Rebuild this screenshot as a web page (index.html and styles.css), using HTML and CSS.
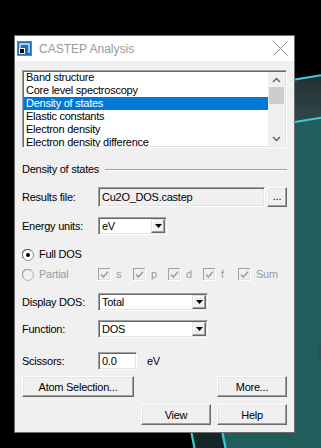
FILE: index.html
```html
<!DOCTYPE html>
<html>
<head>
<meta charset="utf-8">
<link rel="stylesheet" href="styles.css">
</head>
<body>
<svg class="backdrop" width="321" height="448" viewBox="0 0 321 448">
  <defs>
    <linearGradient id="band" x1="0" y1="0" x2="0" y2="1">
      <stop offset="0" stop-color="#243032"/>
      <stop offset="1" stop-color="#2f4748"/>
    </linearGradient>
  </defs>
  <rect width="321" height="448" fill="#000"/>
  <polygon points="295,79.5 321,75.2 321,117.7 295,122" fill="url(#band)"/>
  <polygon points="295,122 321,117.7 321,448 295,448" fill="#215d5b"/>
  <polygon points="223,433 321,433 321,448 226,448" fill="#215d5b"/>
  <polygon points="192,433 222,433 225,448 195,448" fill="#172628"/>
  <ellipse cx="323" cy="352" rx="5" ry="9" fill="#2f4f50"/>
  <line x1="295" y1="79.5" x2="321" y2="75.2" stroke="#3cccd4" stroke-width="2"/>
  <line x1="295" y1="122" x2="321" y2="117.7" stroke="#3cccd4" stroke-width="2"/>
  <line x1="191.5" y1="433" x2="194.5" y2="448" stroke="#3cccd4" stroke-width="2.2"/>
  <line x1="222.5" y1="433" x2="225.5" y2="448" stroke="#3cccd4" stroke-width="2.2"/>
</svg>

<div class="window">
  <div class="titlebar">
    <svg class="app-icon" width="15" height="15" viewBox="0 0 15 15">
      <rect x="0" y="0" width="15" height="15" fill="#3f8fd8"/>
      <rect x="1" y="1" width="13" height="13" fill="#1c6db8"/>
      <path d="M3 12 V3 H12 V12" fill="none" stroke="#d6ebfb" stroke-width="1.4"/>
      <rect x="2.5" y="7.5" width="5" height="5" fill="#0a0a0a" stroke="#e8f3fc" stroke-width="1"/>
    </svg>
    <span class="title">CASTEP Analysis</span>
    <svg class="close" width="15" height="15" viewBox="0 0 15 15">
      <path d="M0.5 0.5 L14.5 14.5 M14.5 0.5 L0.5 14.5" stroke="#8a8a8a" stroke-width="1" fill="none"/>
    </svg>
  </div>

  <div class="panel">
    <div class="listbox sunken">
      <ul class="items">
        <li>Band structure</li>
        <li>Core level spectroscopy</li>
        <li class="selected">Density of states</li>
        <li>Elastic constants</li>
        <li>Electron density</li>
        <li>Electron density difference</li>
      </ul>
      <div class="scrollbar">
        <div class="sb-btn">
          <svg width="9" height="6" viewBox="0 0 9 6"><path d="M1 5 L4.5 1.5 L8 5" fill="none" stroke="#606060" stroke-width="1.4"/></svg>
        </div>
        <div class="thumb"></div>
        <div class="sb-space"></div>
        <div class="sb-btn">
          <svg width="9" height="6" viewBox="0 0 9 6"><path d="M1 1 L4.5 4.5 L8 1" fill="none" stroke="#606060" stroke-width="1.4"/></svg>
        </div>
      </div>
    </div>

    <div class="group">
      <span>Density of states</span>
      <div class="rule"></div>
    </div>

    <div class="row row-file">
      <span class="label">Results file:</span>
      <div class="field sunken">Cu2O_DOS.castep</div>
      <div class="btn btn-browse">...</div>
    </div>

    <div class="row row-energy">
      <span class="label">Energy units:</span>
      <div class="combo sunken combo-energy">
        <span class="value">eV</span>
        <div class="drop"><svg width="7" height="4" viewBox="0 0 7 4"><path d="M0 0 H7 L3.5 4 Z" fill="#000"/></svg></div>
      </div>
    </div>

    <div class="row row-full">
      <div class="radio-label">
        <svg width="12" height="12" viewBox="0 0 12 12">
          <circle cx="6" cy="6" r="5.5" fill="#fff" stroke="#8c8c8c"/>
          <path d="M1.6 9 A5 5 0 0 1 9 1.6" fill="none" stroke="#5a5a5a" stroke-width="1"/>
          <circle cx="6" cy="6" r="2" fill="#000"/>
        </svg>
        <span>Full DOS</span>
      </div>
    </div>

    <div class="row row-partial">
      <div class="radio-label disabled">
        <svg width="12" height="12" viewBox="0 0 12 12">
          <circle cx="6" cy="6" r="5.5" fill="#f0f0f0" stroke="#b4b4b4"/>
          <path d="M1.6 9 A5 5 0 0 1 9 1.6" fill="none" stroke="#9a9a9a" stroke-width="1"/>
        </svg>
        <span>Partial</span>
      </div>
      <div class="check disabled">
        <svg width="13" height="13" viewBox="0 0 13 13"><rect x="0" y="0" width="13" height="13" fill="#fff"/><rect x="0" y="0" width="12" height="12" fill="#a0a0a0"/><rect x="1" y="1" width="11" height="11" fill="#e3e3e3"/><rect x="1" y="1" width="10" height="10" fill="#f0f0f0"/><path d="M3 6.5 L5.3 9 L10 3.8" fill="none" stroke="#a0a0a0" stroke-width="1.6"/></svg>
        <span>s</span>
      </div>
      <div class="check disabled">
        <svg width="13" height="13" viewBox="0 0 13 13"><rect x="0" y="0" width="13" height="13" fill="#fff"/><rect x="0" y="0" width="12" height="12" fill="#a0a0a0"/><rect x="1" y="1" width="11" height="11" fill="#e3e3e3"/><rect x="1" y="1" width="10" height="10" fill="#f0f0f0"/><path d="M3 6.5 L5.3 9 L10 3.8" fill="none" stroke="#a0a0a0" stroke-width="1.6"/></svg>
        <span>p</span>
      </div>
      <div class="check disabled">
        <svg width="13" height="13" viewBox="0 0 13 13"><rect x="0" y="0" width="13" height="13" fill="#fff"/><rect x="0" y="0" width="12" height="12" fill="#a0a0a0"/><rect x="1" y="1" width="11" height="11" fill="#e3e3e3"/><rect x="1" y="1" width="10" height="10" fill="#f0f0f0"/><path d="M3 6.5 L5.3 9 L10 3.8" fill="none" stroke="#a0a0a0" stroke-width="1.6"/></svg>
        <span>d</span>
      </div>
      <div class="check disabled">
        <svg width="13" height="13" viewBox="0 0 13 13"><rect x="0" y="0" width="13" height="13" fill="#fff"/><rect x="0" y="0" width="12" height="12" fill="#a0a0a0"/><rect x="1" y="1" width="11" height="11" fill="#e3e3e3"/><rect x="1" y="1" width="10" height="10" fill="#f0f0f0"/><path d="M3 6.5 L5.3 9 L10 3.8" fill="none" stroke="#a0a0a0" stroke-width="1.6"/></svg>
        <span>f</span>
      </div>
      <div class="check disabled">
        <svg width="13" height="13" viewBox="0 0 13 13"><rect x="0" y="0" width="13" height="13" fill="#fff"/><rect x="0" y="0" width="12" height="12" fill="#a0a0a0"/><rect x="1" y="1" width="11" height="11" fill="#e3e3e3"/><rect x="1" y="1" width="10" height="10" fill="#f0f0f0"/><path d="M3 6.5 L5.3 9 L10 3.8" fill="none" stroke="#a0a0a0" stroke-width="1.6"/></svg>
        <span>Sum</span>
      </div>
    </div>

    <div class="row row-display">
      <span class="label">Display DOS:</span>
      <div class="combo sunken combo-wide">
        <span class="value">Total</span>
        <div class="drop"><svg width="7" height="4" viewBox="0 0 7 4"><path d="M0 0 H7 L3.5 4 Z" fill="#000"/></svg></div>
      </div>
    </div>

    <div class="row row-function">
      <span class="label">Function:</span>
      <div class="combo sunken combo-wide">
        <span class="value">DOS</span>
        <div class="drop"><svg width="7" height="4" viewBox="0 0 7 4"><path d="M0 0 H7 L3.5 4 Z" fill="#000"/></svg></div>
      </div>
    </div>

    <div class="row row-scissors">
      <span class="label">Scissors:</span>
      <div class="textbox sunken">0.0</div>
      <span class="unit">eV</span>
    </div>

    <div class="row row-buttons1">
      <div class="btn btn-atom">Atom Selection...</div>
      <div class="btn btn-std">More...</div>
    </div>

    <div class="row row-buttons2">
      <div class="btn btn-std">View</div>
      <div class="btn btn-std">Help</div>
    </div>
  </div>
</div>
</body>
</html>
```

FILE: styles.css
```css
* { box-sizing: border-box; }

html, body {
  margin: 0;
  background: #000;
}

body {
  position: relative;
  width: 321px;
  height: 448px;
  overflow: hidden;
  padding: 35px 0 0 14px;
  font-family: "Liberation Sans", Arial, sans-serif;
  font-size: 11px;
  color: #000;
}

.backdrop {
  position: absolute;
  left: 0;
  top: 0;
}

.window {
  position: relative;
  width: 281px;
  height: 398px;
  border: 1px solid #6e6e6e;
  background: #f0f0f0;
  display: flex;
  flex-direction: column;
}

.titlebar {
  flex: none;
  height: 25px;
  background: #fff;
  display: flex;
  align-items: center;
  padding: 0 6px 0 2px;
}

.app-icon, .close { flex: none; }

.title {
  flex: 1;
  margin-left: 7px;
  font-size: 12px;
  color: #999;
  white-space: nowrap;
}

.panel {
  flex: 1;
  display: flex;
  flex-direction: column;
  padding: 9px 7px 7px 7px;
  letter-spacing: -0.25px;
}

.sunken {
  border: 1px solid;
  border-color: #a0a0a0 #fff #fff #a0a0a0;
  box-shadow: inset 1px 1px #696969, inset -1px -1px #e3e3e3;
}

.listbox {
  flex: none;
  height: 78px;
  padding: 1px;
  background: #fff;
  display: flex;
  overflow: hidden;
}

.items {
  list-style: none;
  margin: -1px 0 0 0;
  padding: 0;
  flex: 1;
  min-width: 0;
}

.items li {
  height: 13px;
  line-height: 13px;
  padding-left: 2px;
  white-space: nowrap;
}

.items li.selected {
  background: #0078d7;
  color: #fff;
}

.scrollbar {
  flex: none;
  width: 17px;
  background: #f0f0f0;
  display: flex;
  flex-direction: column;
  align-items: center;
}

.sb-btn {
  height: 15px;
  width: 17px;
  display: flex;
  align-items: center;
  justify-content: center;
}

.thumb {
  width: 15px;
  height: 17px;
  background: #cdcdcd;
}

.sb-space { flex: 1; }

.group {
  flex: none;
  margin-top: 15px;
  height: 13px;
  line-height: 13px;
  display: flex;
  align-items: center;
}

.rule {
  flex: 1;
  margin-left: 6px;
  margin-top: 1px;
  border-top: 1px solid #a0a0a0;
  border-bottom: 1px solid #fff;
}

.row {
  flex: none;
  display: flex;
  align-items: center;
}

.label {
  flex: none;
  width: 76px;
  line-height: 13px;
  white-space: nowrap;
}

.row-file { margin-top: 11px; height: 20px; }

.field {
  width: 167px;
  height: 20px;
  padding: 0 3px;
  background: #f0f0f0;
  display: flex;
  align-items: center;
  white-space: nowrap;
}

.btn {
  flex: none;
  height: 21px;
  background: #f0f0f0;
  border: 1px solid;
  border-color: #fff #696969 #696969 #fff;
  box-shadow: inset -1px -1px #a0a0a0, inset 1px 1px #e3e3e3;
  display: flex;
  align-items: center;
  justify-content: center;
  white-space: nowrap;
}

.btn-browse {
  width: 20px;
  height: 20px;
  margin-left: 2px;
  padding-bottom: 2px;
}

.row-energy { margin-top: 10px; height: 18px; }

.combo {
  height: 18px;
  padding: 1px;
  background: #fff;
  display: flex;
  align-items: center;
}

.combo-energy { width: 69px; }
.combo-wide { width: 110px; }

.combo .value {
  flex: 1;
  padding-left: 2px;
  white-space: nowrap;
}

.drop {
  flex: none;
  width: 14px;
  height: 14px;
  background: #f0f0f0;
  border: 1px solid;
  border-color: #e3e3e3 #696969 #696969 #e3e3e3;
  box-shadow: inset -1px -1px #a0a0a0, inset 1px 1px #fff;
  display: flex;
  align-items: center;
  justify-content: center;
}

.row-full { margin-top: 13px; height: 13px; }
.row-partial { margin-top: 7px; height: 13px; }

.radio-label {
  flex: none;
  width: 76px;
  display: flex;
  align-items: center;
  line-height: 13px;
}

.radio-label svg { flex: none; }
.radio-label span { margin-left: 5px; }

.disabled { color: #9b9b9b; }

.check {
  flex: none;
  width: 35px;
  display: flex;
  align-items: center;
  line-height: 13px;
}

.check svg { flex: none; }
.check span { margin-left: 5px; }

.row-display { margin-top: 12px; height: 18px; }
.row-function { margin-top: 9px; height: 18px; }

.row-scissors { margin-top: 14px; height: 18px; }

.textbox {
  width: 39px;
  height: 18px;
  padding: 0 3px;
  background: #fff;
  display: flex;
  align-items: center;
}

.unit { margin-left: 10px; }

.row-buttons1 {
  margin-top: 6px;
  justify-content: space-between;
}

.btn-atom { width: 112px; }
.btn-std { width: 70px; }

.row-buttons2 {
  margin-top: 7px;
  justify-content: flex-end;
  gap: 6px;
}
```
